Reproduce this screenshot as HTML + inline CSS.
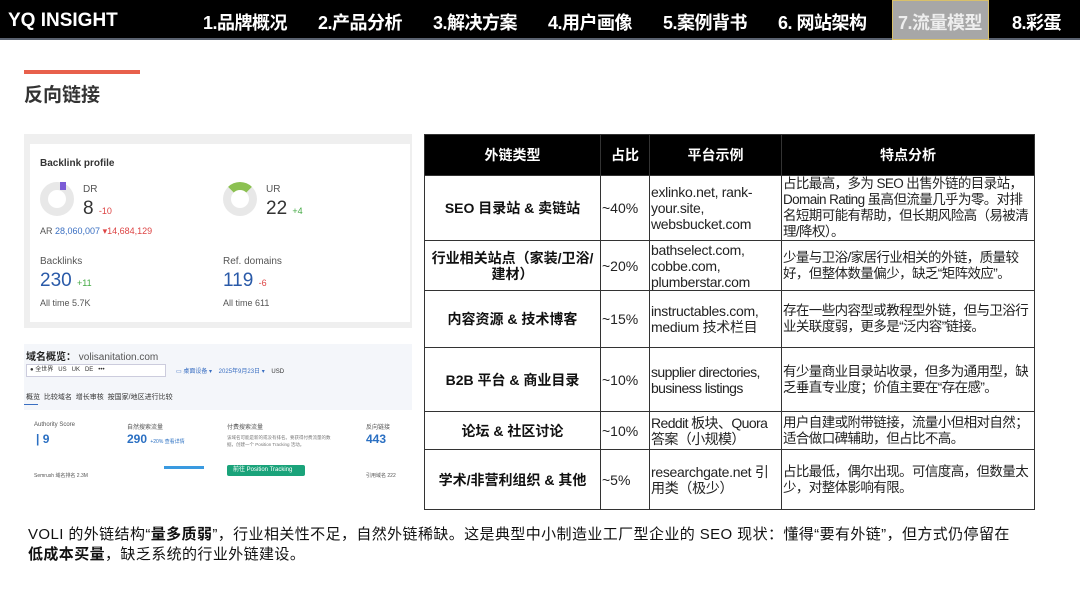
<!DOCTYPE html>
<html><head><meta charset="utf-8"><style>
*{margin:0;padding:0;box-sizing:border-box}
body{width:1080px;height:608px;background:#fff;font-family:"Liberation Sans","Noto Sans CJK SC",sans-serif;position:relative;overflow:hidden;color:#111}
.nav{position:absolute;left:0;top:0;width:1080px;height:40px;background:#000;border-bottom:2px solid #5a6270}
.logo{position:absolute;left:8px;top:10px;color:#fff;font-size:19px;font-weight:bold}
.nav span.t{position:absolute;top:9px;color:#fff;font-size:18px;font-weight:bold;white-space:nowrap;letter-spacing:-0.5px}
.act{position:absolute;left:892px;top:0;width:97px;height:40px;background:#a7a7a7;border:1px solid #d8c06a}
.abs{position:absolute}
table{position:absolute;left:424px;top:134px;width:611px;border-collapse:collapse;font-size:14px;table-layout:fixed}
td,th{border:1px solid #333;line-height:16px;overflow:hidden}
th{background:#000;color:#fff;height:41px;font-size:14px}
td.a{text-align:center;font-weight:bold;font-size:14px;padding:0 2px}
td.b{padding-left:1px;color:#222}
td.c{padding-left:1px;color:#222;letter-spacing:-0.3px;font-size:14px}
td.d{padding-left:1px;color:#222;letter-spacing:-0.6px;font-size:13.5px}
.card{position:absolute;background:#fff}
</style></head><body>
<div class="nav">
<div class="logo">YQ INSIGHT</div>
<div class="act"></div>
<span class="t" style="left:203px">1.品牌概况</span>
<span class="t" style="left:318px">2.产品分析</span>
<span class="t" style="left:433px">3.解决方案</span>
<span class="t" style="left:548px">4.用户画像</span>
<span class="t" style="left:663px">5.案例背书</span>
<span class="t" style="left:778px">6. 网站架构</span>
<span class="t" style="left:898px;color:#eee">7.流量模型</span>
<span class="t" style="left:1012px">8.彩蛋</span>
</div>
<div class="abs" style="left:24px;top:70px;width:116px;height:4px;background:#e8604c"></div>
<div class="abs" style="left:24px;top:80px;font-size:19px;font-weight:bold;color:#333">反向链接</div>

<div class="abs" style="left:24px;top:134px;width:388px;height:194px;background:#efefef">
 <div class="card" style="left:6px;top:10px;width:380px;height:178px">
  <div class="abs" style="left:10px;top:14px;font-size:10px;font-weight:bold;color:#333">Backlink profile</div>
  <div class="abs" style="left:10px;top:38px;width:34px;height:34px;border-radius:50%;border:8px solid #e8e8e8"></div>
  <div class="abs" style="left:30px;top:38px;width:6px;height:8px;background:#7b5cd6"></div>
  <div class="abs" style="left:53px;top:40px;font-size:10px;color:#555">DR</div>
  <div class="abs" style="left:53px;top:54px;font-size:19px;color:#333">8 <span style="font-size:9px;color:#d44">-10</span></div>
  <div class="abs" style="left:10px;top:82px;font-size:9px;color:#555">AR <span style="color:#3a6fc2">28,060,007</span> <span style="color:#d44">▾14,684,129</span></div>
  <div class="abs" style="left:193px;top:38px;width:34px;height:34px;border-radius:50%;border:8px solid #e8e8e8;border-top-color:#8cc152"></div>
  <div class="abs" style="left:236px;top:40px;font-size:10px;color:#555">UR</div>
  <div class="abs" style="left:236px;top:54px;font-size:19px;color:#333">22 <span style="font-size:9px;color:#4a4">+4</span></div>
  <div class="abs" style="left:10px;top:112px;font-size:10px;color:#555">Backlinks</div>
  <div class="abs" style="left:10px;top:126px;font-size:19px;color:#2a5aa8">230 <span style="font-size:9px;color:#4a4">+11</span></div>
  <div class="abs" style="left:10px;top:154px;font-size:9px;color:#555">All time 5.7K</div>
  <div class="abs" style="left:193px;top:112px;font-size:10px;color:#555">Ref. domains</div>
  <div class="abs" style="left:193px;top:126px;font-size:19px;color:#2a5aa8">119 <span style="font-size:9px;color:#d44">-6</span></div>
  <div class="abs" style="left:193px;top:154px;font-size:9px;color:#555">All time 611</div>
 </div>
</div>

<div class="abs" style="left:24px;top:344px;width:388px;height:146px;background:#f4f6fa">
  <div class="abs" style="left:2px;top:4px;font-size:10px;color:#222"><b>域名概览：</b> <span style="color:#555">volisanitation.com</span></div>
  <div class="abs" style="left:2px;top:20px;width:140px;height:13px;background:#fff;border:1px solid #ccd;font-size:6px;color:#333;line-height:11px;padding-left:3px">● 全世界 &nbsp; US &nbsp; UK &nbsp; DE &nbsp; •••</div>
  <div class="abs" style="left:152px;top:22px;font-size:6px;color:#3a6fc2">▭ 桌面设备 ▾ &nbsp;&nbsp; 2025年9月23日 ▾ &nbsp;&nbsp; <span style="color:#333">USD</span></div>
  <div class="abs" style="left:2px;top:48px;font-size:7px;color:#333">概览 &nbsp;比较域名 &nbsp;增长审核 &nbsp;按国家/地区进行比较</div>
  <div class="abs" style="left:0;top:60px;width:14px;height:1px;background:#3a6fc2"></div>
  <div class="card" style="left:0;top:66px;width:388px;height:80px">
   <div class="abs" style="left:10px;top:12px;font-size:6px;color:#555">Authority Score</div>
   <div class="abs" style="left:12px;top:22px;font-size:12px;color:#2a6fc2;font-weight:bold">| 9</div>
   <div class="abs" style="left:10px;top:62px;font-size:5px;color:#555">Semrush 域名排名 2.3M</div>
   <div class="abs" style="left:103px;top:12px;font-size:6px;color:#555">自然搜索流量</div>
   <div class="abs" style="left:103px;top:22px;font-size:12px;color:#2a6fc2;font-weight:bold">290 <span style="font-size:5px;font-weight:normal">+20% 查看详情</span></div>
   <div class="abs" style="left:140px;top:56px;width:40px;height:3px;background:#3a9ae0"></div>
   <div class="abs" style="left:203px;top:12px;font-size:6px;color:#555">付费搜索流量</div>
   <div class="abs" style="left:203px;top:24px;width:110px;font-size:4.5px;color:#777;line-height:7px">该域名可能是新的或没有排名。要获得付费流量的数据，创建一个 Position Tracking 活动。</div>
   <div class="abs" style="left:203px;top:55px;width:78px;height:11px;background:#1aa37a;color:#fff;font-size:6px;line-height:11px;padding-left:6px;border-radius:2px">前往 Position Tracking</div>
   <div class="abs" style="left:342px;top:12px;font-size:6px;color:#555">反向链接</div>
   <div class="abs" style="left:342px;top:22px;font-size:12px;color:#2a6fc2;font-weight:bold">443</div>
   <div class="abs" style="left:342px;top:62px;font-size:5px;color:#555">引用域名 222</div>
  </div>
</div>

<table>
<colgroup><col style="width:176px"><col style="width:49px"><col style="width:132px"><col></colgroup>
<tr><th>外链类型</th><th>占比</th><th>平台示例</th><th>特点分析</th></tr>
<tr style="height:65px"><td class="a">SEO 目录站 &amp; 卖链站</td><td class="b">~40%</td><td class="c">exlinko.net, rank-your.site, websbucket.com</td><td class="d">占比最高，多为 SEO 出售外链的目录站，Domain Rating 虽高但流量几乎为零。对排名短期可能有帮助，但长期风险高（易被清理/降权）。</td></tr>
<tr style="height:50px"><td class="a">行业相关站点（家装/卫浴/建材）</td><td class="b">~20%</td><td class="c">bathselect.com, cobbe.com, plumberstar.com</td><td class="d">少量与卫浴/家居行业相关的外链，质量较好，但整体数量偏少，缺乏“矩阵效应”。</td></tr>
<tr style="height:57px"><td class="a">内容资源 &amp; 技术博客</td><td class="b">~15%</td><td class="c">instructables.com, medium 技术栏目</td><td class="d">存在一些内容型或教程型外链，但与卫浴行业关联度弱，更多是“泛内容”链接。</td></tr>
<tr style="height:64px"><td class="a">B2B 平台 &amp; 商业目录</td><td class="b">~10%</td><td class="c" style="letter-spacing:-0.6px">supplier directories, business listings</td><td class="d">有少量商业目录站收录，但多为通用型，缺乏垂直专业度；价值主要在“存在感”。</td></tr>
<tr style="height:38px"><td class="a">论坛 &amp; 社区讨论</td><td class="b">~10%</td><td class="c" style="letter-spacing:-0.6px">Reddit 板块、Quora 答案（小规模）</td><td class="d">用户自建或附带链接，流量小但相对自然；适合做口碑辅助，但占比不高。</td></tr>
<tr style="height:60px"><td class="a">学术/非营利组织 &amp; 其他</td><td class="b">~5%</td><td class="c">researchgate.net 引用类（极少）</td><td class="d">占比最低，偶尔出现。可信度高，但数量太少，对整体影响有限。</td></tr>
</table>

<div class="abs" style="left:28px;top:525px;width:1030px;font-size:15px;line-height:20px;color:#111;letter-spacing:0.4px">VOLI 的外链结构“<b>量多质弱</b>”，行业相关性不足，自然外链稀缺。这是典型中小制造业工厂型企业的 SEO 现状：懂得“要有外链”，但方式仍停留在<br><b>低成本买量</b>，缺乏系统的行业外链建设。</div>
</body></html>
